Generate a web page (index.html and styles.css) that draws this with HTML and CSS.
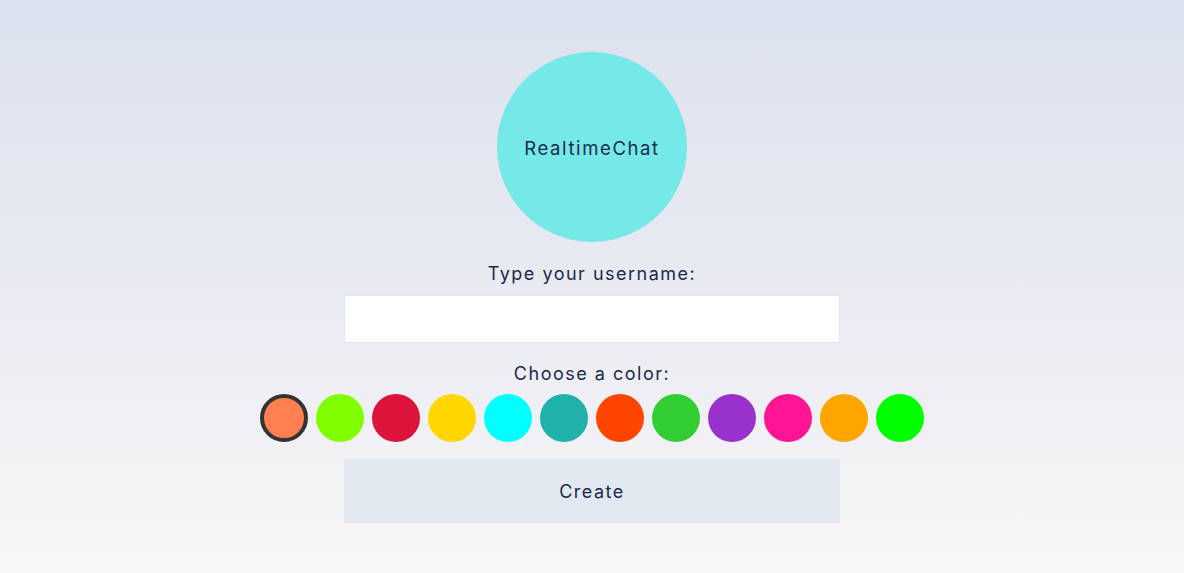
FILE: index.html
```html
<!DOCTYPE html>
<html>
<head>
<meta charset="utf-8">
<link rel="stylesheet" href="styles.css">
</head>
<body>
<main class="page">
  <div class="logo">RealtimeChat</div>
  <label class="label label-user" for="username">Type your username:</label>
  <input class="input" id="username" type="text">
  <div class="label label-color">Choose a color:</div>
  <div class="colors">
    <span class="swatch selected" style="background:#ff7f50"></span>
    <span class="swatch" style="background:#7fff00"></span>
    <span class="swatch" style="background:#dc143c"></span>
    <span class="swatch" style="background:#ffd700"></span>
    <span class="swatch" style="background:#00ffff"></span>
    <span class="swatch" style="background:#20b2aa"></span>
    <span class="swatch" style="background:#ff4500"></span>
    <span class="swatch" style="background:#32cd32"></span>
    <span class="swatch" style="background:#9932cc"></span>
    <span class="swatch" style="background:#ff1493"></span>
    <span class="swatch" style="background:#ffa500"></span>
    <span class="swatch" style="background:#00ff00"></span>
  </div>
  <button class="create">Create</button>
</main>
</body>
</html>
```
FILE: styles.css
```css
html, body {
  margin: 0;
  height: 100%;
}
body {
  background: linear-gradient(to bottom, #dbe1ed 0%, #e8eaf2 47%, #f8f6f7 100%);
  font-family: "Inter", "Liberation Sans", sans-serif;
  color: #1b2a4b;
}
.page {
  display: flex;
  flex-direction: column;
  align-items: center;
  padding-top: 52px;
}
.logo {
  width: 190px;
  height: 190px;
  border-radius: 50%;
  background: #75e8e8;
  display: flex;
  align-items: center;
  justify-content: center;
  font-size: 18.5px;
  letter-spacing: 1.6px;
  padding-top: 1px;
  box-sizing: border-box;
}
.label {
  font-size: 18px;
  line-height: 26px;
  letter-spacing: 1.5px;
}
.label-user {
  margin-top: 19px;
}
.input {
  box-sizing: border-box;
  width: 496px;
  height: 48px;
  margin-top: 8px;
  border: 1px solid #e2e4ea;
  background: #ffffff;
  outline: none;
}
.label-color {
  margin-top: 18px;
}
.colors {
  display: flex;
  gap: 8px;
  margin-top: 7px;
}
.swatch {
  box-sizing: border-box;
  width: 48px;
  height: 48px;
  border-radius: 50%;
}
.swatch.selected {
  border: 4px solid #333333;
}
.create {
  width: 496px;
  height: 64px;
  margin-top: 17px;
  padding-top: 1px;
  border: none;
  background: #e1e8f0;
  font-family: inherit;
  font-size: 18px;
  color: #1b2a4b;
  letter-spacing: 1.5px;
}
```
